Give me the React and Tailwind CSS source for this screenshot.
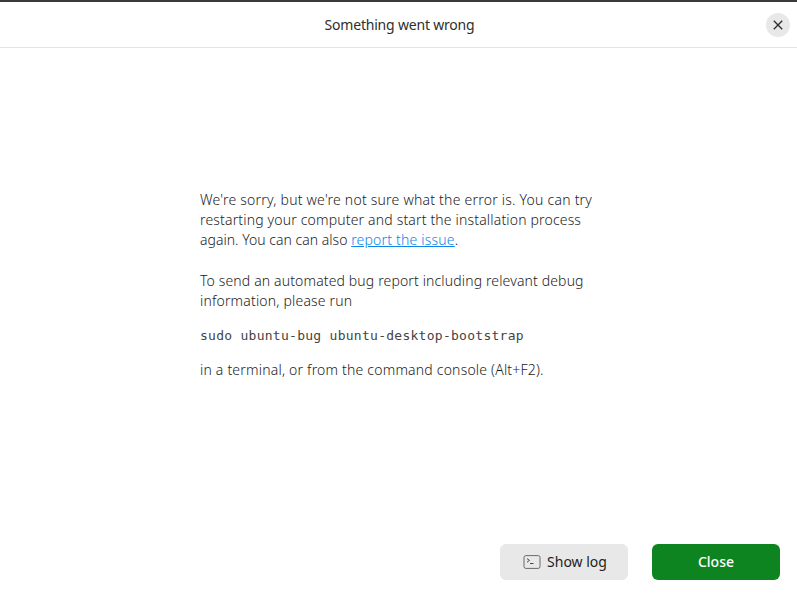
function CloseIcon() {
  return (
    <svg width="10" height="10" viewBox="0 0 10 10" fill="none" stroke="#2b2b2b" strokeWidth="1.3">
      <path d="M0.8 0.8 9.2 9.2M9.2 0.8 0.8 9.2" />
    </svg>
  );
}

function TerminalIcon() {
  return (
    <svg width="18" height="14" viewBox="0 0 18 14" fill="none" stroke="#6a6a6a">
      <rect x="1" y="0.6" width="16" height="12.8" rx="1.8" />
      <path d="M4 3.6 6.5 5.4 4 7.2M7 8.5H10.5" stroke="#4a4a4a" />
    </svg>
  );
}

export default function App() {
  return (
    <div className="flex h-[600px] w-[797px] flex-col border-t-2 border-[#3a3a3a] bg-white font-['Noto_Sans','Open_Sans',sans-serif] text-[14px] text-[#1c1c1c]">
      <header className="grid h-[46px] shrink-0 grid-cols-[1fr_auto_1fr] items-center border-b border-[#e4e4e4] pr-[7px]">
        <h1 className="col-start-2 ml-[9px] whitespace-nowrap text-[14px] tracking-[-0.2px] text-[#2e2e2e]">Something went wrong</h1>
        <button aria-label="Close window" className="flex size-6 items-center justify-center justify-self-end rounded-full bg-[#e8e8e8]">
          <CloseIcon />
        </button>
      </header>

      <main className="flex-1 whitespace-nowrap pl-[200px] pt-[142px] font-light leading-5">
        <p>
          <span className="block w-fit tracking-[0.23px]">We're sorry, but we're not sure what the error is. You can try</span>
          <span className="block w-fit tracking-[0.17px]">restarting your computer and start the installation process</span>
          <span className="block w-fit tracking-[0.02px]">
            again. You can can also <a className="tracking-[0.2px] text-[#0c86ea] underline">report the issue</a>.
          </span>
        </p>
        <p className="mt-[21px]">
          <span className="block w-fit tracking-[0.14px]">To send an automated bug report including relevant debug</span>
          <span className="block w-fit tracking-[0.18px]">information, please run</span>
        </p>
        <code className="mt-[15px] block w-fit font-['DejaVu_Sans_Mono',monospace] text-[13px] tracking-[0.27px] text-[#444444]">
          sudo ubuntu-bug ubuntu-desktop-bootstrap
        </code>
        <p className="mt-[14px] w-fit tracking-[0.2px]">in a terminal, or from the command console (Alt+F2).</p>
      </main>

      <footer className="flex shrink-0 justify-end gap-6 pb-5 pr-[17px]">
        <button className="flex h-9 w-32 items-center justify-center gap-[6px] rounded-md bg-[#e8e8e8] pl-[2px] text-[#222222]">
          <TerminalIcon />
          <span className="pb-px">Show log</span>
        </button>
        <button className="h-9 w-32 rounded-md bg-[#0e8420] pb-px font-medium text-white">Close</button>
      </footer>
    </div>
  );
}
